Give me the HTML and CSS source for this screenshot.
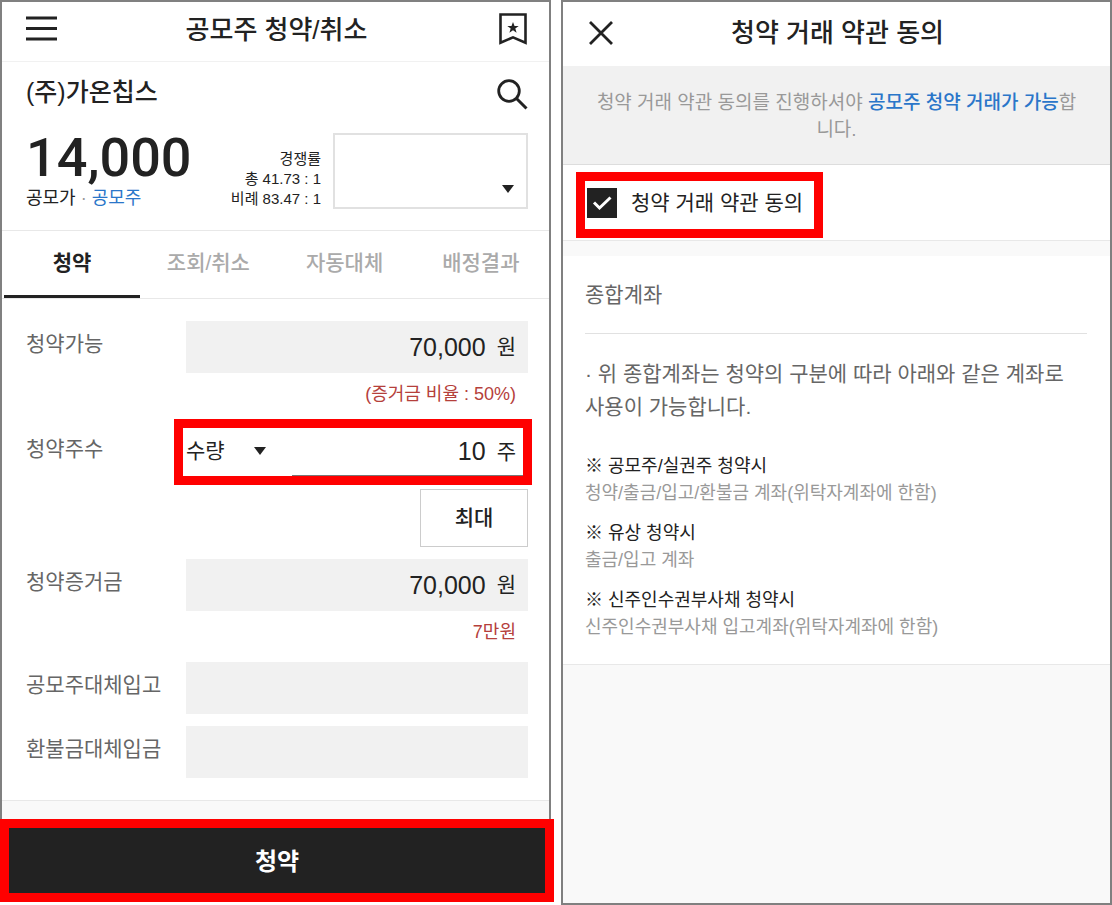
FILE: index.html
```html
<!DOCTYPE html>
<html lang="ko">
<head>
<meta charset="utf-8">
<meta name="viewport" content="width=device-width, initial-scale=1">
<title>공모주 청약/취소</title>
<link rel="stylesheet" href="styles.css">
</head>
<body>
<main class="screens">
  <section class="column">
    <form class="panel order" id="order">
      <header class="bar">
        <button type="button" class="icon-btn" aria-label="메뉴">
          <svg width="31" height="25" viewBox="0 0 31 25" stroke="#222" stroke-width="3"><path d="M0 2h31M0 12.500h31M0 23h31"/></svg>
        </button>
        <h1 class="bar-title">공모주 청약/취소</h1>
        <button type="button" class="icon-btn" aria-label="관심종목">
          <svg width="28" height="32" viewBox="0 0 28 32"><path d="M1.500 1.500h25v28.300L14 24.300 1.500 29.800z" fill="none" stroke="#222" stroke-width="2.600"/><path d="M14 9l1.500 4h4.200l-3.400 2.600 1.300 4.100L14 17.200l-3.600 2.500 1.300-4.100L8.300 13h4.200z" fill="#222"/></svg>
        </button>
      </header>

      <div class="quote">
        <div class="quote-name">
          <h2 class="stock">(주)가온칩스</h2>
          <button type="button" class="icon-btn" aria-label="종목 검색">
            <svg width="31" height="31" viewBox="0 0 31 31" fill="none" stroke="#222"><circle cx="12" cy="12" r="10.300" stroke-width="2.800"/><path d="M19.500 19.500L29.500 29.500" stroke-width="3"/></svg>
          </button>
        </div>
        <div class="quote-price">
          <div class="price-block">
            <strong class="price">14,000</strong>
            <p class="price-note">공모가 <span class="dot">·</span> <a class="link" href="#ipo">공모주</a></p>
          </div>
          <div class="ratio">
            <p>경쟁률</p>
            <p>총 41.73 : 1</p>
            <p>비례 83.47 : 1</p>
          </div>
          <span class="picker account-picker">
            <select class="picker-input" aria-label="계좌"><option></option></select>
            <svg class="caret" width="12" height="8" viewBox="0 0 12 8"><path d="M0 0h12L6 8z" fill="#222"/></svg>
          </span>
        </div>
      </div>

      <nav class="tabs">
        <a class="tab tab-on" href="#apply">청약</a>
        <a class="tab" href="#history">조회/취소</a>
        <a class="tab" href="#auto">자동대체</a>
        <a class="tab" href="#result">배정결과</a>
      </nav>

      <div class="fields">
        <div class="row">
          <label class="label" for="available">청약가능</label>
          <div>
            <div class="box"><input class="value" id="available" value="70,000" readonly><span class="unit">원</span></div>
            <p class="hint">(증거금 비율 : 50%)</p>
          </div>
        </div>
        <div class="row row-qty">
          <label class="label" for="qty">청약주수</label>
          <div>
            <div class="qty mark">
              <span class="picker qty-picker">
                <select class="picker-input" aria-label="수량 구분"><option>수량</option></select>
                <svg class="caret" width="12" height="8" viewBox="0 0 12 8"><path d="M0 0h12L6 8z" fill="#222"/></svg>
              </span>
              <span class="qty-entry"><input class="value" id="qty" value="10"><span class="unit">주</span></span>
            </div>
            <button type="button" class="max">최대</button>
          </div>
        </div>
        <div class="row">
          <label class="label" for="deposit">청약증거금</label>
          <div>
            <div class="box"><input class="value" id="deposit" value="70,000" readonly><span class="unit">원</span></div>
            <p class="hint">7만원</p>
          </div>
        </div>
        <div class="row">
          <label class="label" for="stock-in">공모주대체입고</label>
          <div class="box"><input class="value" id="stock-in" readonly></div>
        </div>
        <div class="row">
          <label class="label" for="cash-in">환불금대체입금</label>
          <div class="box"><input class="value" id="cash-in" readonly></div>
        </div>
      </div>
    </form>
    <button type="submit" form="order" class="submit mark">청약</button>
  </section>

  <section class="panel terms">
    <header class="bar bar-terms">
      <button type="button" class="icon-btn" aria-label="닫기">
        <svg width="26" height="24" viewBox="0 0 26 24" stroke="#222" stroke-width="2.800"><path d="M3 1L25 23M25 1L3 23"/></svg>
      </button>
      <h1 class="bar-title">청약 거래 약관 동의</h1>
    </header>
    <p class="notice">청약 거래 약관 동의를 진행하셔야 <strong class="notice-key">공모주 청약 거래가 가능</strong>합니다.</p>
    <div class="agree">
      <label class="agree-label mark">
        <span class="check">
          <input type="checkbox" class="check-input" checked>
          <svg class="check-tick" width="30" height="30" viewBox="0 0 30 30" fill="none" stroke="#fff" stroke-width="3"><path d="M7 14.500L12.500 20 23.500 9.500"/></svg>
        </span>
        <span class="agree-text">청약 거래 약관 동의</span>
      </label>
    </div>
    <article class="account">
      <h2 class="account-title">종합계좌</h2>
      <p class="account-text">· 위 종합계좌는 청약의 구분에 따라 아래와 같은 계좌로 사용이 가능합니다.</p>
      <dl class="guide">
        <div><dt>※ 공모주/실권주 청약시</dt><dd>청약/출금/입고/환불금 계좌(위탁자계좌에 한함)</dd></div>
        <div><dt>※ 유상 청약시</dt><dd>출금/입고 계좌</dd></div>
        <div><dt>※ 신주인수권부사채 청약시</dt><dd>신주인수권부사채 입고계좌(위탁자계좌에 한함)</dd></div>
      </dl>
    </article>
  </section>
</main>
</body>
</html>
```
FILE: styles.css
```css
* { box-sizing: border-box; margin: 0; padding: 0; }

body {
  background: #fff;
  color: #222;
  font-family: "Liberation Sans", "Noto Sans CJK KR", sans-serif;
  font-size: 21px;
}

button, input, select { font: inherit; color: inherit; border: 0; border-radius: 0; background: none; }
button { cursor: pointer; }
a { color: inherit; text-decoration: none; }

.screens {
  display: grid;
  grid-template-columns: repeat(2, minmax(0, 1fr));
  gap: 10px;
  min-height: 100vh;
}

.column { display: flex; flex-direction: column; padding-bottom: 3px; }
.panel { border: 2px solid #808080; background: #f9f9f9; }
.order { flex: 1; border-bottom: 0; }

/* red frame that marks the step to take */
.mark { border: 9px solid #f00; }

/* title bar */
.bar {
  display: grid;
  grid-template-columns: 40px 1fr 40px;
  align-items: center;
  height: 60px;
  padding: 0 22px 6px 24px;
  background: #fff;
  border-bottom: 1px solid #f1f1f1;
}
.bar-title { padding-top: 2px; font-size: 26px; font-weight: 500; line-height: 32px; text-align: center; }
.bar-terms { height: 64px; padding: 0 22px 2px 24px; border-bottom: 0; }
.bar-terms .bar-title { padding-top: 0; }
.icon-btn { display: flex; }
.icon-btn:last-child { justify-self: end; }

/* quote */
.quote { padding: 17px 21px 21px 24px; background: #fff; border-bottom: 1px solid #e8e8e8; }
.quote-name { display: flex; justify-content: space-between; align-items: flex-start; }
.stock { font-size: 25px; font-weight: 500; line-height: 26px; }
.quote-price { display: flex; align-items: flex-end; gap: 12px; margin-top: 19px; }
.price-block { flex: 1; }
.price { display: block; font-family: Roboto, sans-serif; font-size: 54px; font-weight: 500; line-height: 58px; }
.price-note { font-size: 18px; line-height: 22px; }
.dot { color: #999; }
.link { color: #2a76c9; }
.ratio { font-size: 15px; line-height: 20px; text-align: right; }

.picker { position: relative; display: block; }
.picker-input { appearance: none; width: 100%; height: 100%; outline: 0; }
.caret { position: absolute; pointer-events: none; }
.account-picker { width: 195px; height: 76px; border: 2px solid #e1e1e1; }
.account-picker .caret { right: 12px; bottom: 14px; }

/* tabs */
.tabs { display: grid; grid-template-columns: repeat(4, 1fr); padding-left: 2px; background: #fff; border-bottom: 1px solid #e8e8e8; }
.tab { height: 67px; border-bottom: 3px solid transparent; color: #aaa; font-weight: 500; line-height: 64px; text-align: center; }
.tab-on { color: #222; font-weight: 700; border-color: #222; }

/* form */
.fields { display: flex; flex-direction: column; gap: 12px; padding: 22px 21px; background: #fff; border-bottom: 1px solid #e8e8e8; }
.row { display: grid; grid-template-columns: 160px minmax(0, 1fr); padding-left: 3px; }
.label { color: #666; line-height: 46px; }
.box { display: flex; align-items: center; height: 52px; padding-right: 12px; background: #f1f1f1; }
.value { flex: 1; width: 100%; min-width: 0; font-size: 25px; text-align: right; outline: 0; }
.unit { margin-left: 11px; padding-bottom: 4px; }
.hint { margin-top: 3px; padding-right: 12px; color: #b5403b; font-size: 18px; line-height: 36px; text-align: right; }

.row-qty { margin-top: -5px; }
.row-qty .label { line-height: 60px; }
.qty { display: flex; height: 66px; margin: 0 -4px 0 -12px; padding-left: 3px; }
.qty-picker { width: 106px; }
.qty-picker .picker-input { padding-bottom: 4px; }
.qty-picker .caret { right: 26px; top: 19px; }
.qty-entry { display: flex; flex: 1; align-items: center; padding-right: 7px; border-bottom: 1px solid #777; }
.max { display: block; width: 108px; height: 58px; margin: 4px 0 0 auto; padding-bottom: 4px; border: 1px solid #ccc; font-weight: 500; }

.submit { width: calc(100% + 3px); height: 83px; padding-bottom: 2px; background: #222; color: #fff; font-size: 24px; font-weight: 700; }

/* terms */
.notice { padding: 23px 28px 21px; background: #f1f1f1; border-bottom: 1px solid #ddd; color: #999; font-size: 19px; line-height: 27px; text-align: center; }
.notice-key { color: #2a76c9; font-weight: 500; }
.agree { padding: 7px 13px 2px; background: #fff; border-bottom: 1px solid #e8e8e8; }
.agree-label { display: inline-flex; align-items: center; gap: 14px; height: 66px; padding: 0 11px 4px 2px; vertical-align: top; }
.agree-text { padding-bottom: 4px; }
.check { position: relative; display: block; width: 30px; height: 30px; }
.check-input { appearance: none; display: block; width: 30px; height: 30px; border: 1px solid #999; }
.check-input:checked { background: #222; border-color: #222; }
.check-tick { position: absolute; inset: 0; pointer-events: none; }

.account { margin-top: 15px; padding: 0 23px 23px 22px; background: #fff; border-bottom: 1px solid #e8e8e8; color: #666; }
.account-title { font-size: 21px; font-weight: 400; line-height: 77px; border-bottom: 1px solid #e1e1e1; }
.account-text { margin-top: 23px; line-height: 33px; }
.guide { display: flex; flex-direction: column; gap: 13px; margin-top: 30px; font-size: 18px; line-height: 27px; }
.guide dt { color: #222; }
.guide dd { color: #999; }
```
